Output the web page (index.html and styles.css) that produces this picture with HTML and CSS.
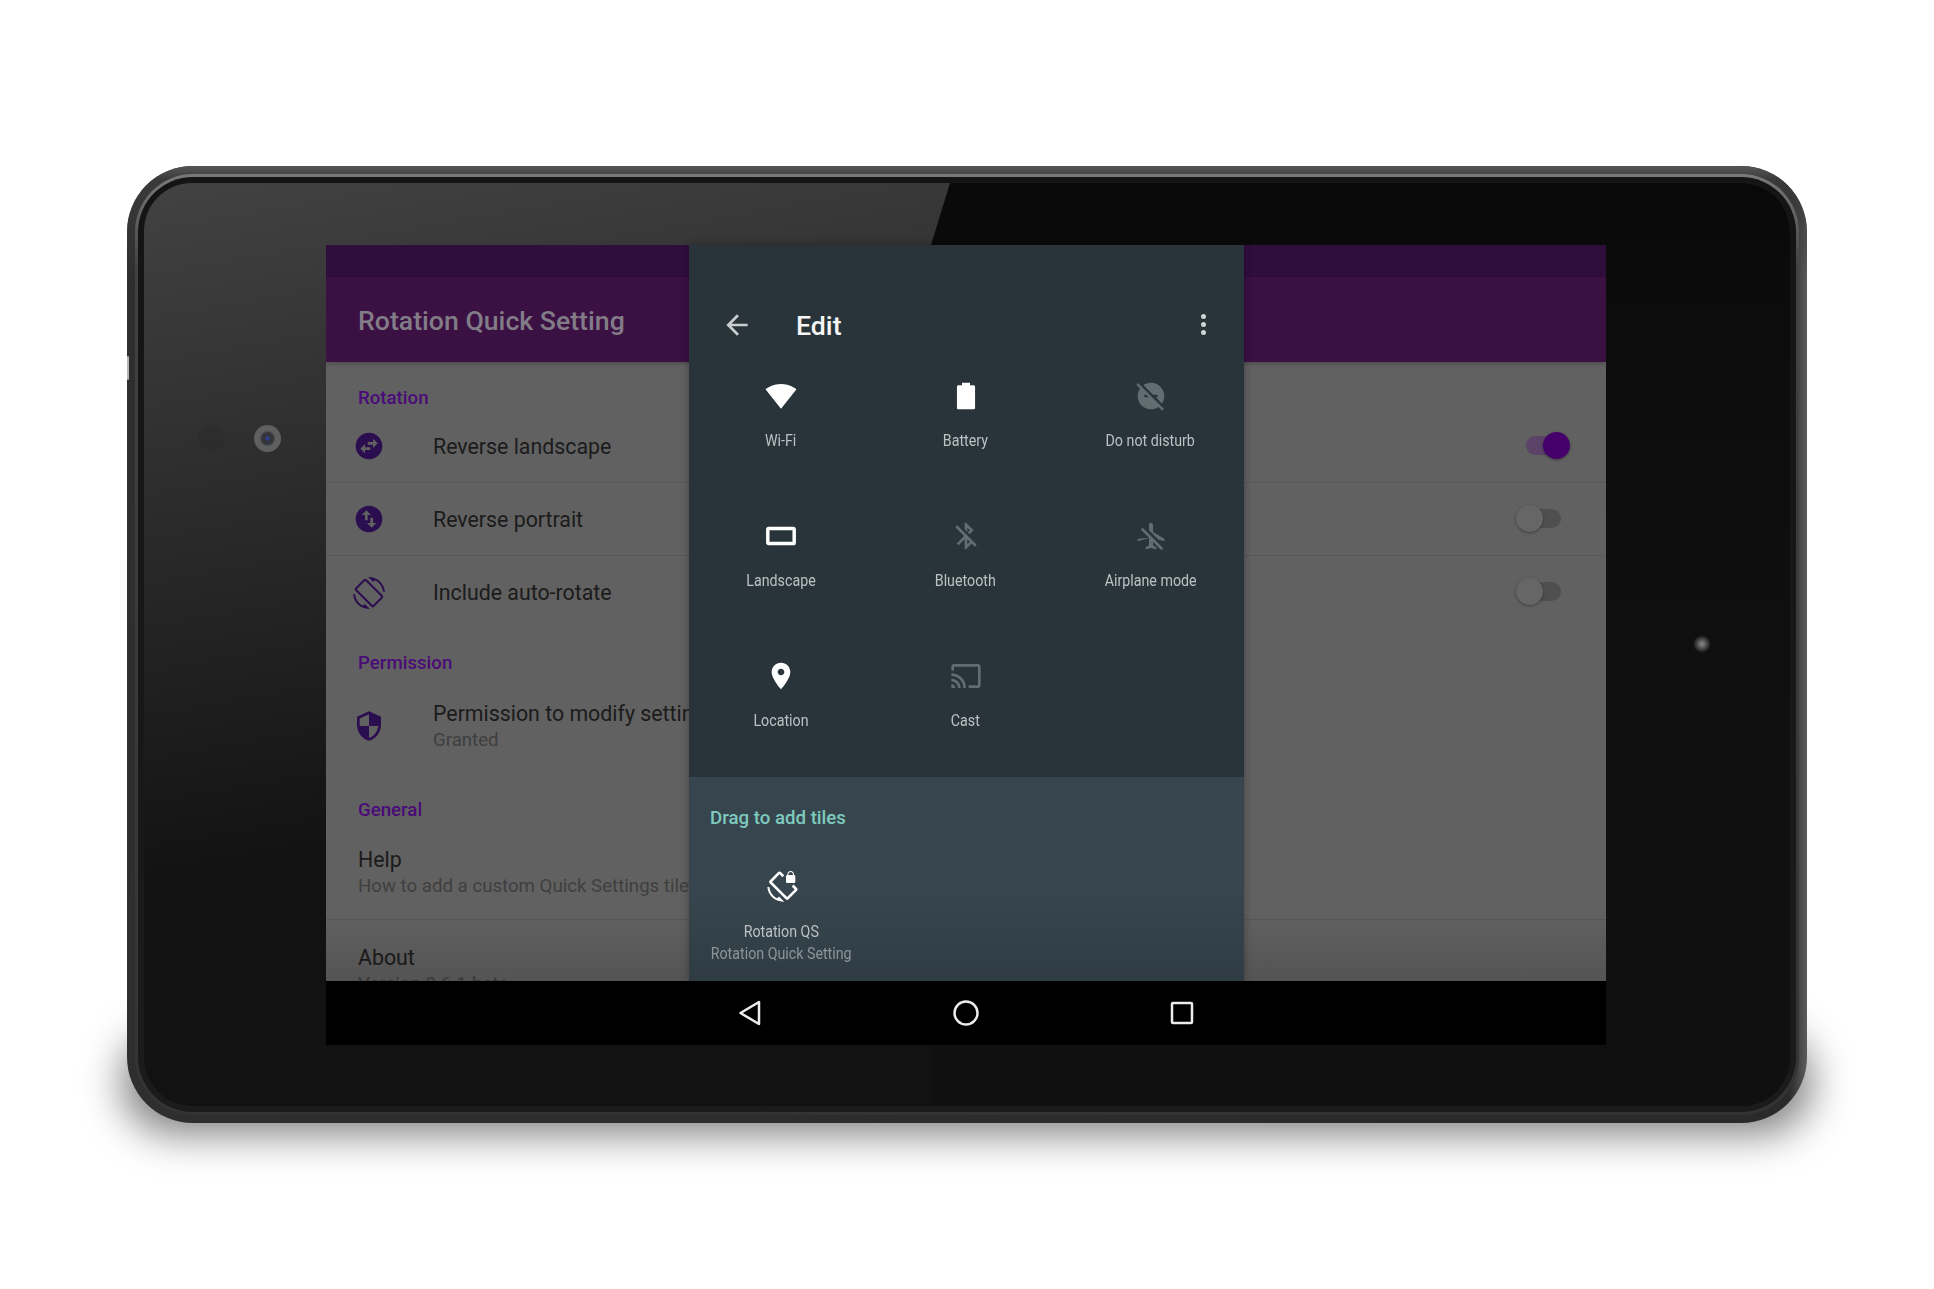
FILE: index.html
```html
<!DOCTYPE html>
<html lang="en">
<head>
  <meta charset="UTF-8">
  <meta name="viewport" content="width=device-width, initial-scale=1.0">
  <title>Rotation Quick Setting</title>
  <link rel="stylesheet" href="styles.css">
</head>
<body>
  <div class="stage">
    <div class="device-shadow"></div>
    <div class="device">
      <div class="device-notch"></div>
      <div class="rim-light">
        <div class="rim-dark">
          <div class="bezel">
            <div class="reflection"></div>
            <div class="sensor-dim"></div>
            <div class="camera"></div>
            <div class="sensor"></div>

            <div class="screen">
              <div class="app">
                <div class="status-bar"></div>
                <div class="toolbar">Rotation Quick Setting</div>

                <div class="section-title first">Rotation</div>
                <div class="row">
                  <svg class="row-icon" viewBox="0 0 24 24"><path d="M22 12c0-5.52-4.48-10-10-10S2 6.48 2 12s4.48 10 10 10 10-4.48 10-10zm-7-5.5l3.5 3.5-3.5 3.5V11h-4V9h4V6.5zm-6 11L5.5 14 9 10.5V13h4v2H9v2.5z"/></svg>
                  <span class="row-title">Reverse landscape</span>
                  <div class="toggle on"><div class="track"></div><div class="thumb"></div></div>
                </div>
                <div class="row">
                  <svg class="row-icon" viewBox="0 0 24 24"><path d="M12 2C6.48 2 2 6.48 2 12s4.48 10 10 10 10-4.48 10-10S17.52 2 12 2zM6.5 9L10 5.5 13.5 9H11v4H9V9H6.5zm11 6L14 18.5 10.5 15H13v-4h2v4h2.5z"/></svg>
                  <span class="row-title">Reverse portrait</span>
                  <div class="toggle"><div class="track"></div><div class="thumb"></div></div>
                </div>
                <div class="row last">
                  <svg class="row-icon" viewBox="0 0 24 24"><path d="M16.48 2.52c3.27 1.55 5.61 4.72 5.97 8.48h1.5C23.44 4.84 18.29 0 12 0l-.66.03 3.81 3.81 1.33-1.32zm-6.25-.77c-.59-.59-1.54-.59-2.12 0L1.75 8.11c-.59.59-.59 1.54 0 2.12l12.02 12.02c.59.59 1.54.59 2.12 0l6.36-6.36c.59-.59.59-1.54 0-2.12L10.23 1.75zm4.6 19.44L2.81 9.17l6.36-6.36 12.02 12.02-6.36 6.36zm-7.31.29C4.25 19.94 1.91 16.76 1.55 13H.05C.56 19.16 5.71 24 12 24l.66-.03-3.81-3.81-1.33 1.32z"/></svg>
                  <span class="row-title">Include auto-rotate</span>
                  <div class="toggle"><div class="track"></div><div class="thumb"></div></div>
                </div>

                <div class="section-title permission">Permission</div>
                <div class="row-tall">
                  <svg class="row-icon" viewBox="0 0 24 24"><path d="M12 1L3 5v6c0 5.55 3.84 10.74 9 12 5.16-1.26 9-6.45 9-12V5l-9-4zm0 10.99h7c-.53 4.12-3.28 7.79-7 8.94V12H5V6.3l7-3.11v8.8z"/></svg>
                  <div>
                    <div class="row-title">Permission to modify settings</div>
                    <div class="row-sub">Granted</div>
                  </div>
                </div>

                <div class="section-title general">General</div>
                <div class="row-plain">
                  <div class="row-title">Help</div>
                  <div class="row-sub">How to add a custom Quick Settings tile</div>
                </div>
                <div class="row-plain about">
                  <div class="row-title">About</div>
                  <div class="row-sub">Version 0.6.1-beta</div>
                </div>
                <div class="list-fade"></div>
              </div>

              <!-- quick settings edit panel, sits over the app -->
              <div class="qs-panel">
                <div class="qs-current">
                  <div class="qs-header">
                    <svg class="qs-back" viewBox="0 0 24 24"><path d="M20 11H7.83l5.59-5.59L12 4l-8 8 8 8 1.41-1.41L7.83 13H20v-2z"/></svg>
                    <span class="qs-title">Edit</span>
                    <div class="qs-more"><i></i><i></i><i></i></div>
                  </div>
                  <div class="tile-grid">
                    <div class="tile">
                      <svg viewBox="0 0 24 24"><path d="M12.01 21.49L23.64 7c-.45-.34-4.93-4-11.64-4C5.28 3 .81 6.66.36 7l11.63 14.49.01.01.01-.01z"/></svg>
                      <div class="tile-label">Wi-Fi</div>
                    </div>
                    <div class="tile">
                      <svg viewBox="0 0 24 24"><path d="M9 2h6v2h2.6c.7 0 1.2.5 1.2 1.2v15.6c0 .7-.5 1.2-1.2 1.2H6.4c-.7 0-1.2-.5-1.2-1.2V5.2C5.2 4.5 5.7 4 6.4 4H9z"/></svg>
                      <div class="tile-label">Battery</div>
                    </div>
                    <div class="tile off">
                      <svg viewBox="0 0 24 24"><path d="M17 11v2h-1.46l4.68 4.68C21.34 16.07 22 14.11 22 12c0-5.52-4.48-10-10-10-2.11 0-4.07.66-5.68 1.78L13.54 11H17zM2.27 2.27L1 3.54l2.78 2.78C2.66 7.93 2 9.89 2 12c0 5.52 4.48 10 10 10 2.11 0 4.07-.66 5.68-1.78L20.46 23l1.27-1.27L11 11 2.27 2.27zM7 13v-2h1.46l2 2H7z"/></svg>
                      <div class="tile-label">Do not disturb</div>
                    </div>
                    <div class="tile">
                      <svg viewBox="0 0 24 24"><rect class="landscape" x="2.1" y="6.3" width="19.8" height="11.4" rx=".6"/></svg>
                      <div class="tile-label">Landscape</div>
                    </div>
                    <div class="tile off">
                      <svg viewBox="0 0 24 24"><path d="M13 5.83l1.88 1.88-1.6 1.6 1.41 1.41 3.02-3.02L12 2h-1v5.03l2 2v-3.2zM5.41 4L4 5.41 10.59 12 5 17.59 6.41 19 11 14.41V22h1l4.29-4.29 2.3 2.29L20 18.59 5.41 4zM13 18.17v-3.76l1.88 1.88L13 18.17z"/></svg>
                      <div class="tile-label">Bluetooth</div>
                    </div>
                    <div class="tile off">
                      <svg viewBox="0 0 24 24"><path d="M10.5 7.67V3.5c0-.83.67-1.5 1.5-1.5s1.5.67 1.5 1.5V9l8.5 5v2l-4.49-1.32-7.01-7.01zm9.28 14.94l1.41-1.41-7.69-7.69-7.69-7.69-1.41 1.41 6.1 6.1L2 14v2l8.5-2.5V19L8 20.5V22l4-1 4 1v-1.5L13.5 19v-2.67l6.28 6.28z"/></svg>
                      <div class="tile-label">Airplane mode</div>
                    </div>
                    <div class="tile">
                      <svg viewBox="0 0 24 24"><path d="M12 2C8.13 2 5 5.13 5 9c0 5.25 7 13 7 13s7-7.75 7-13c0-3.87-3.13-7-7-7zm0 9.5c-1.38 0-2.5-1.12-2.5-2.5s1.12-2.5 2.5-2.5 2.5 1.12 2.5 2.5-1.12 2.5-2.5 2.5z"/></svg>
                      <div class="tile-label">Location</div>
                    </div>
                    <div class="tile off">
                      <svg viewBox="0 0 24 24"><path d="M21 3H3c-1.1 0-2 .9-2 2v3h2V5h18v14h-7v2h7c1.1 0 2-.9 2-2V5c0-1.1-.9-2-2-2zM1 18v3h3c0-1.66-1.34-3-3-3zm0-4v2c2.76 0 5 2.24 5 5h2c0-3.87-3.13-7-7-7zm0-4v2c4.97 0 9 4.03 9 9h2c0-6.08-4.93-11-11-11z"/></svg>
                      <div class="tile-label">Cast</div>
                    </div>
                  </div>
                </div>
                <div class="qs-add">
                  <div class="qs-add-title">Drag to add tiles</div>
                  <div class="tile add-tile">
                    <svg viewBox="0 0 24 24"><path d="M23.25 12.77l-2.57-2.57-1.41 1.41 2.22 2.22-5.66 5.66L4.51 8.17l5.66-5.66 2.1 2.1 1.41-1.41L11.23.75c-.59-.59-1.54-.59-2.12 0L2.75 7.11c-.59.59-.59 1.54 0 2.12l12.02 12.02c.59.59 1.54.59 2.12 0l6.36-6.36c.59-.59.59-1.54 0-2.12zM8.47 20.48C5.2 18.94 2.86 15.76 2.5 12H1c.51 6.16 5.66 11 11.95 11l.66-.03-3.81-3.82-1.33 1.33zM16 9h5c.55 0 1-.45 1-1V4c0-.55-.45-1-1-1v-.5C21 1.12 19.88 0 18.5 0S16 1.12 16 2.5V3c-.55 0-1 .45-1 1v4c0 .55.45 1 1 1zm.8-6.5c0-.94.76-1.7 1.7-1.7s1.7.76 1.7 1.7V3h-3.4v-.5z"/></svg>
                    <div class="tile-label">Rotation QS</div>
                    <div class="tile-sub">Rotation Quick Setting</div>
                  </div>
                </div>
              </div>

              <div class="nav-bar">
                <svg class="nav-icon" viewBox="0 0 32 32"><polygon points="6.5,16 25,5 25,27"/></svg>
                <svg class="nav-icon" viewBox="0 0 32 32"><circle cx="16" cy="16" r="11.5"/></svg>
                <svg class="nav-icon" viewBox="0 0 32 32"><rect x="6" y="6" width="20" height="20" rx="1"/></svg>
              </div>
            </div>
          </div>
        </div>
      </div>
    </div>
  </div>
</body>
</html>
```

FILE: styles.css
```css
* {
  box-sizing: border-box;
}

body {
  margin: 0;
  background: #fff;
  font-family: Roboto, "Liberation Sans", sans-serif;
}

.stage {
  position: relative;
  width: 1934px;
  height: 1289px;
  padding: 166px 0 0 127px;
  overflow: hidden;
}

.device-shadow {
  position: absolute;
  left: 122px;
  top: 1030px;
  width: 1690px;
  height: 104px;
  border-radius: 60px;
  background: rgba(0, 0, 0, 0.5);
  filter: blur(20px);
}

/* device frame, three nested rings */
.device {
  position: relative;
  width: 1680px;
  height: 957px;
  padding: 8px;
  border-radius: 66px;
  background: linear-gradient(90deg, #2e2e2e 0, #2a2a2a 98.9%, #5c5c5c 100%);
}

.device::before {
  content: "";
  position: absolute;
  inset: 0;
  border-radius: 66px;
  background: linear-gradient(#565656 0, #3a3a3a 1.4%, rgba(40, 40, 40, 0) 12%);
}

.device-notch {
  position: absolute;
  left: 0;
  top: 190px;
  width: 2px;
  height: 24px;
  border-radius: 1px;
  background: #b5b5b5;
}

.rim-light {
  position: relative;
  height: 100%;
  padding: 3px;
  border-radius: 58px;
  background: linear-gradient(#7a7a7a 0, #414141 10%, #333 100%);
}

.rim-dark {
  height: 100%;
  padding: 6px;
  border-radius: 55px;
  background: linear-gradient(#141414, #1b1b1b);
}

.bezel {
  position: relative;
  height: 100%;
  padding: 62px 0 0 182px;
  border-radius: 48px;
  overflow: hidden;
  background: linear-gradient(170deg, #424242 0, #121212 58%);
}

.reflection {
  position: absolute;
  inset: 0;
  background: linear-gradient(#090909 0, #0c0c0c 15%, #101010 60%);
  clip-path: polygon(806px 0, 100% 0, 100% 100%, 787px 100%, 787px 62px);
}

.camera {
  position: absolute;
  left: 110px;
  top: 242px;
  width: 27px;
  height: 27px;
  border-radius: 50%;
  background: radial-gradient(circle, #2d3c96 0 8%, #34353b 14% 30%, #5f5f5f 42% 80%, #414141 100%);
}

.sensor-dim {
  position: absolute;
  left: 54px;
  top: 242px;
  width: 27px;
  height: 27px;
  border-radius: 50%;
  background: rgba(0, 0, 0, 0.05);
}

.sensor {
  position: absolute;
  left: 1549px;
  top: 452px;
  width: 18px;
  height: 18px;
  background: radial-gradient(circle, #8c8c8c 0, #666 22%, rgba(100, 100, 100, 0) 70%);
}

/* screen */
.screen {
  position: relative;
  width: 1280px;
  height: 800px;
}

.app {
  position: relative;
  height: 736px;
  overflow: hidden;
  background: #616161;
}

.status-bar {
  height: 32px;
  background: #2f0d3d;
}

.toolbar {
  height: 85px;
  padding: 28px 0 0 32px;
  line-height: 32px;
  font-size: 26.67px;
  font-weight: 500;
  color: #827c87;
  background: #3b1043;
  box-shadow: 0 2px 4px rgba(0, 0, 0, 0.2);
}

.section-title {
  padding-left: 32px;
  line-height: 24px;
  font-size: 18.67px;
  font-weight: 500;
  color: #4a0c78;
}

.section-title.first {
  margin-top: 24px;
}

.section-title.permission {
  margin-top: 22px;
}

.section-title.general {
  margin-top: 22px;
}

.row {
  display: flex;
  align-items: center;
  gap: 48px;
  height: 73px;
  padding: 0 36px 0 27px;
  border-bottom: 1px solid #585858;
}

.row.last {
  border-bottom: none;
}

.row-tall {
  display: flex;
  align-items: center;
  gap: 48px;
  padding: 24px 36px 24px 27px;
}

.row-plain {
  padding: 23px 0 21px 32px;
  border-bottom: 1px solid #585858;
}

.row-plain.about {
  padding-top: 23px;
  border-bottom: none;
}

.row-icon {
  flex: none;
  width: 32px;
  height: 32px;
  fill: #2b0e4f;
}

.row-title {
  display: block;
  line-height: 29px;
  font-size: 21.33px;
  color: #1b1b1b;
  white-space: nowrap;
}

.row-sub {
  line-height: 24px;
  font-size: 18.67px;
  color: #3f3f3f;
  white-space: nowrap;
}

.list-fade {
  position: absolute;
  left: 0;
  right: 0;
  bottom: 0;
  height: 70px;
  background: linear-gradient(rgba(0, 0, 0, 0), rgba(0, 0, 0, 0.14));
}

.toggle {
  position: relative;
  flex: none;
  width: 54px;
  height: 27px;
  margin: -2px 0 0 auto;
}

.track {
  position: absolute;
  left: 10px;
  top: 4px;
  width: 35px;
  height: 19px;
  border-radius: 10px;
  background: #4f4f4f;
}

.thumb {
  position: absolute;
  left: 0;
  top: 0;
  width: 27px;
  height: 27px;
  border-radius: 50%;
  background: #666;
  box-shadow: 0 1px 3px rgba(0, 0, 0, 0.35);
}

.toggle.on .track {
  background: #5c4368;
}

.toggle.on .thumb {
  left: 27px;
  background: #45006b;
}

/* quick settings panel */
.qs-panel {
  position: absolute;
  top: 0;
  left: 363px;
  width: 555px;
  height: 736px;
  display: flex;
  flex-direction: column;
  box-shadow: 0 0 8px rgba(0, 0, 0, 0.3);
}

.qs-current {
  height: 532px;
  padding-top: 63px;
  background: #29343a;
}

.qs-header {
  display: flex;
  align-items: center;
  height: 36px;
  padding: 0 38px 0 32px;
}

.qs-back {
  width: 32px;
  height: 32px;
  margin-top: -2px;
  fill: #c9cdce;
}

.qs-title {
  margin-left: 43px;
  font-size: 26.67px;
  font-weight: 500;
  color: #f5f5f5;
}

.qs-more {
  display: flex;
  flex-direction: column;
  gap: 3px;
  margin-top: -3px;
  margin-left: auto;
}

.qs-more i {
  display: block;
  width: 5px;
  height: 5px;
  border-radius: 50%;
  background: #d0d3d4;
}

.tile-grid {
  display: grid;
  grid-template-columns: repeat(3, 185px);
  row-gap: 53.5px;
  margin: 20px 0 0 -1px;
}

.tile {
  display: flex;
  flex-direction: column;
  align-items: center;
  padding-top: 16px;
}

.tile svg {
  width: 32px;
  height: 32px;
  fill: #fff;
}

.tile.off svg {
  fill: #626d72;
}

.tile svg .landscape {
  fill: none;
  stroke: #fff;
  stroke-width: 2.6;
}

.tile-label {
  margin-top: 18.5px;
  line-height: 20px;
  font-size: 16px;
  color: #bcc1c3;
  white-space: nowrap;
  transform: scaleX(0.89);
}

.tile-sub {
  margin-top: 2px;
  line-height: 20px;
  font-size: 16px;
  color: #8b969b;
  white-space: nowrap;
  transform: scaleX(0.89);
}

.qs-add {
  flex: 1;
  padding-top: 29px;
  background: linear-gradient(#37464e 0, #37464e 55%, #2f3c43 100%);
}

.qs-add-title {
  padding-left: 21px;
  line-height: 24px;
  font-size: 18.67px;
  font-weight: 500;
  color: #7fcabf;
}

.add-tile {
  width: 185px;
  padding-top: 41px;
}

.add-tile .tile-label {
  margin-top: 19px;
}

/* navigation bar */
.nav-bar {
  display: flex;
  justify-content: center;
  align-items: center;
  gap: 184px;
  height: 64px;
  background: #000;
}

.nav-icon {
  width: 32px;
  height: 32px;
  fill: none;
  stroke: #ececec;
  stroke-width: 2.5;
  stroke-linejoin: round;
}
```
